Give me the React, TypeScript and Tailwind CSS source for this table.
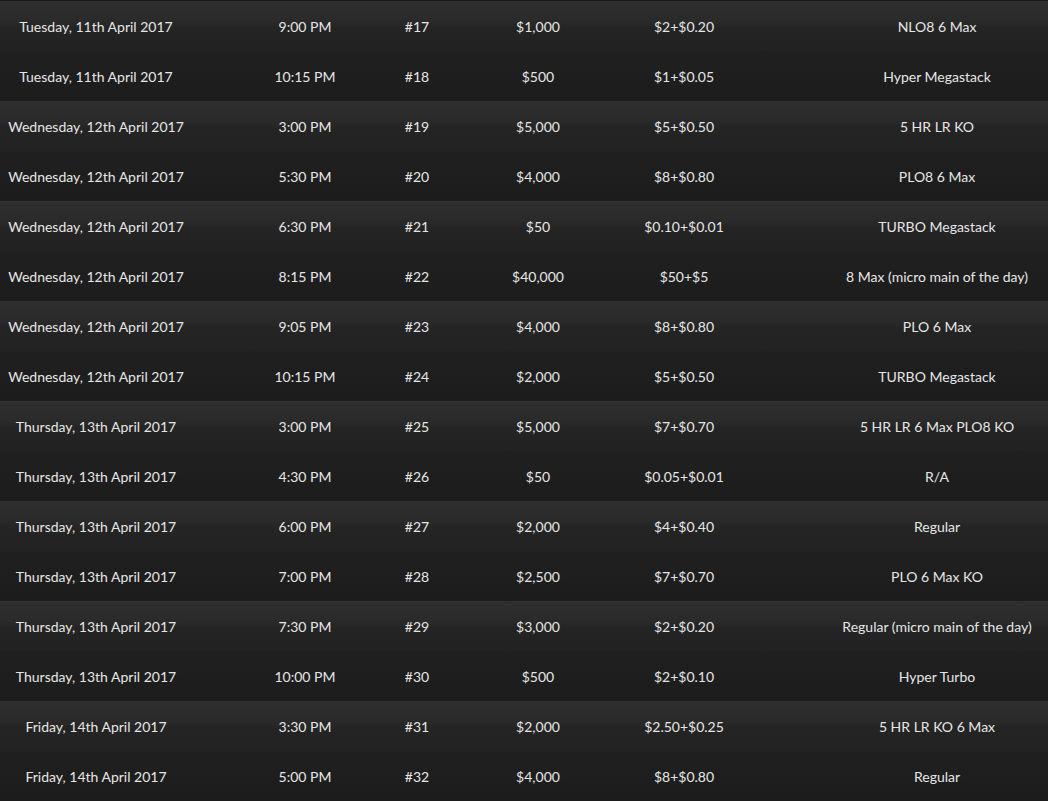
const rows = [
  ['Tuesday, 11th April 2017', '9:00 PM', '#17', '$1,000', '$2+$0.20', 'NLO8 6 Max'],
  ['Tuesday, 11th April 2017', '10:15 PM', '#18', '$500', '$1+$0.05', 'Hyper Megastack'],
  ['Wednesday, 12th April 2017', '3:00 PM', '#19', '$5,000', '$5+$0.50', '5 HR LR KO'],
  ['Wednesday, 12th April 2017', '5:30 PM', '#20', '$4,000', '$8+$0.80', 'PLO8 6 Max'],
  ['Wednesday, 12th April 2017', '6:30 PM', '#21', '$50', '$0.10+$0.01', 'TURBO Megastack'],
  ['Wednesday, 12th April 2017', '8:15 PM', '#22', '$40,000', '$50+$5', '8 Max (micro main of the day)'],
  ['Wednesday, 12th April 2017', '9:05 PM', '#23', '$4,000', '$8+$0.80', 'PLO 6 Max'],
  ['Wednesday, 12th April 2017', '10:15 PM', '#24', '$2,000', '$5+$0.50', 'TURBO Megastack'],
  ['Thursday, 13th April 2017', '3:00 PM', '#25', '$5,000', '$7+$0.70', '5 HR LR 6 Max PLO8 KO'],
  ['Thursday, 13th April 2017', '4:30 PM', '#26', '$50', '$0.05+$0.01', 'R/A'],
  ['Thursday, 13th April 2017', '6:00 PM', '#27', '$2,000', '$4+$0.40', 'Regular'],
  ['Thursday, 13th April 2017', '7:00 PM', '#28', '$2,500', '$7+$0.70', 'PLO 6 Max KO'],
  ['Thursday, 13th April 2017', '7:30 PM', '#29', '$3,000', '$2+$0.20', 'Regular (micro main of the day)'],
  ['Thursday, 13th April 2017', '10:00 PM', '#30', '$500', '$2+$0.10', 'Hyper Turbo'],
  ['Friday, 14th April 2017', '3:30 PM', '#31', '$2,000', '$2.50+$0.25', '5 HR LR KO 6 Max'],
  ['Friday, 14th April 2017', '5:00 PM', '#32', '$4,000', '$8+$0.80', 'Regular'],
];

export default function App() {
  return (
    <div className="w-[1048px] h-[801px] overflow-hidden bg-[#1a1a1a] border-t border-[#1a1a1a] font-['Lato',sans-serif] text-[14px] text-[#e6e6e6]">
      {rows.map((r, i) => (
        <div
          key={r[2]}
          className={
            'grid grid-cols-[192px_176px_98px_144px_148px_290px] h-[50px] items-center ' +
            (i % 2 === 0
              ? 'bg-[linear-gradient(to_bottom,#2f2f2f_0%,#2a2a2a_40%,#242424_55%,#222222_100%)]'
              : 'bg-[linear-gradient(to_bottom,#202020_0%,#1c1c1c_100%)]')
          }
        >
          <div className="text-center whitespace-nowrap">{r[0]}</div>
          <div className="text-center pl-[50px]">{r[1]}</div>
          <div className="text-center">{r[2]}</div>
          <div className="text-center">{r[3]}</div>
          <div className="text-center">{r[4]}</div>
          <div className="text-center pl-[68px] whitespace-nowrap">{r[5]}</div>
        </div>
      ))}
    </div>
  );
}
